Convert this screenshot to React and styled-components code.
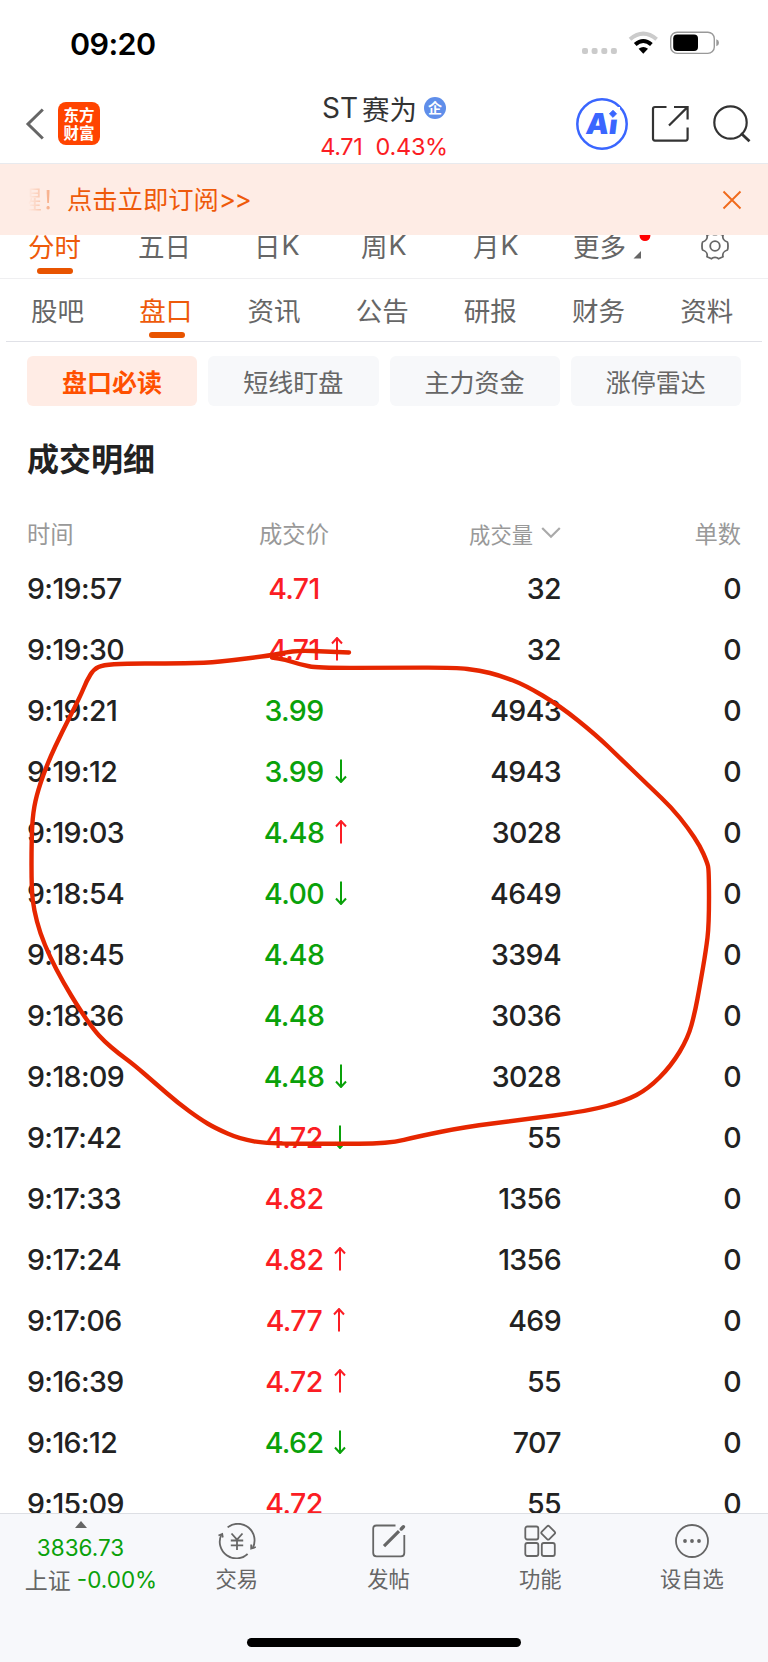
import React from 'react'
import styled, { createGlobalStyle, css } from 'styled-components'

const UP = '#fb1d24'
const DOWN = '#0aa10a'

const chartTabs = [
    { name: '分时', active: true },
    { name: '五日' },
    { name: '日', k: true },
    { name: '周', k: true },
    { name: '月', k: true },
    { name: '更多', more: true },
]

const infoTabs = ['股吧', '盘口', '资讯', '公告', '研报', '财务', '资料']
const chips = ['盘口必读', '短线盯盘', '主力资金', '涨停雷达']

const deals = [
    { time: '9:19:57', price: '4.71', color: UP, volume: 32 },
    { time: '9:19:30', price: '4.71', color: UP, arrow: 'up', volume: 32 },
    { time: '9:19:21', price: '3.99', color: DOWN, volume: 4943 },
    { time: '9:19:12', price: '3.99', color: DOWN, arrow: 'down', volume: 4943 },
    { time: '9:19:03', price: '4.48', color: DOWN, arrow: 'up', volume: 3028 },
    { time: '9:18:54', price: '4.00', color: DOWN, arrow: 'down', volume: 4649 },
    { time: '9:18:45', price: '4.48', color: DOWN, volume: 3394 },
    { time: '9:18:36', price: '4.48', color: DOWN, volume: 3036 },
    { time: '9:18:09', price: '4.48', color: DOWN, arrow: 'down', volume: 3028 },
    { time: '9:17:42', price: '4.72', color: UP, arrow: 'down', volume: 55 },
    { time: '9:17:33', price: '4.82', color: UP, volume: 1356 },
    { time: '9:17:24', price: '4.82', color: UP, arrow: 'up', volume: 1356 },
    { time: '9:17:06', price: '4.77', color: UP, arrow: 'up', volume: 469 },
    { time: '9:16:39', price: '4.72', color: UP, arrow: 'up', volume: 55 },
    { time: '9:16:12', price: '4.62', color: DOWN, arrow: 'down', volume: 707 },
    { time: '9:15:09', price: '4.72', color: UP, volume: 55 },
]

// hand drawn mark around the odd orders
const markPoints = [
    [349, 652.5], [325, 651.5], [300, 650.5], [285, 652.5], [270, 655.5], [235, 660], [205, 663],
    [165, 663.5], [125, 663.5], [103, 665], [94, 669], [87, 680], [80, 697], [62, 732], [48, 762],
    [38, 790], [33, 812], [31.5, 840], [31.5, 890], [34, 910], [40, 933], [50, 957], [63, 982],
    [80, 1010], [94, 1030], [104, 1041], [118, 1053], [133, 1064], [155, 1083], [178, 1103],
    [200, 1119], [215, 1128], [240, 1139], [268, 1143.7], [330, 1143.7], [388, 1143.7], [420, 1136],
    [465, 1127], [520, 1120], [588, 1111], [625, 1101], [648, 1089], [671, 1066], [688, 1038],
    [695, 1012], [700, 985], [706, 950], [709, 925], [709, 870], [707, 862], [700, 846], [688, 828],
    [672, 808], [650, 787], [620, 758], [596, 735], [560, 706], [525, 685], [500, 675.5], [480, 670.5],
    [455, 667.5], [390, 667.8], [318, 668], [300, 664.5], [285, 659.5], [272, 657.5],
]

const smoothPath = (pts) => {
    let d = `M${pts[0][0]} ${pts[0][1]}`
    for (let i = 1; i < pts.length - 1; i++) {
        const [x, y] = pts[i]
        const [nx, ny] = pts[i + 1]
        d += ` Q${x} ${y} ${(x + nx) / 2} ${(y + ny) / 2}`
    }
    const last = pts[pts.length - 1]
    return `${d} L${last[0]} ${last[1]}`
}

const Arrow = ({ dir }) => (
    <ArrowIcon viewBox="0 0 12 24" $dir={dir}>
        <path d="M6 23.5V1.5M1 6.5L6 1L11 6.5" />
    </ArrowIcon>
)

const StatusBar = () => (
    <Status>
        <Clock>09:20</Clock>
        <svg width="138" height="26" viewBox="0 0 138 26">
            <g fill="#cbcbcb">
                <rect x="0" y="17" width="6" height="6" rx="2" />
                <rect x="9.6" y="17" width="6" height="6" rx="2" />
                <rect x="19.3" y="17" width="6" height="6" rx="2" />
                <rect x="28.9" y="17" width="6" height="6" rx="2" />
            </g>
            <g fill="none" strokeWidth="4">
                <path d="M48 8.3Q61.3 -3 74.6 8.3" stroke="#cbcbcb" />
                <path d="M53.2 13.6Q61.3 6.4 69.4 13.6" stroke="#000" />
            </g>
            <path d="M56.6 17.8Q61.3 14 66 17.8L61.3 22.8Z" fill="#000" />
            <rect x="88.7" y="1.2" width="43.6" height="21.2" rx="6.5" fill="none" stroke="#999" strokeWidth="1.4" />
            <rect x="91.2" y="3.6" width="24.8" height="16.4" rx="4" fill="#000" />
            <path d="M134.3 8.3Q137 9.2 137 11.8Q137 14.4 134.3 15.3Z" fill="#999" />
        </svg>
    </Status>
)

const Header = () => (
    <TopBar>
        <TopLeft>
            <svg width="20" height="32" viewBox="0 0 20 32">
                <path d="M17.8 1.5L3 16L17.8 30.5" fill="none" stroke="#666" strokeWidth="3" />
            </svg>
            <Logo>
                <span>东方</span>
                <span>财富</span>
            </Logo>
        </TopLeft>
        <Stock>
            <StockName>
                <span>ST</span>
                赛为
                <Badge>企</Badge>
            </StockName>
            <Quote>
                <span>4.71</span>
                <span>0.43%</span>
            </Quote>
        </Stock>
        <TopRight>
            <svg width="52" height="52" viewBox="0 0 52 52">
                <circle cx="26" cy="26" r="24.7" fill="none" stroke="#3a66ff" strokeWidth="2.5" />
                <AiText x="13.5" y="36" transform="skewX(-7)">Ai</AiText>
                <rect x="32" y="9" width="12" height="12.6" fill="#fff" />
                <path d="M37 12.2L40.6 15.8L37 19.4L33.4 15.8Z" fill="#3a66ff" stroke="#3a66ff" strokeWidth="0.8" />
            </svg>
            <svg width="38" height="38" viewBox="0 0 38 38" fill="none" stroke="#333" strokeWidth="2.2">
                <path d="M15.5 2H4Q2 2 2 4V33.6Q2 35.6 4 35.6H34.6Q36.6 35.6 36.6 33.6V22.5" />
                <path d="M23 2H36.6V14.5M36.2 2.4L18 20.5" />
            </svg>
            <svg width="38" height="38" viewBox="0 0 38 38" fill="none" stroke="#333" strokeWidth="2.2">
                <circle cx="17.5" cy="17.5" r="16.2" />
                <path d="M28 28.2L36.5 36.3" strokeWidth="2.8" />
            </svg>
        </TopRight>
    </TopBar>
)

const TradeIcon = () => (
    <svg width="40" height="36" viewBox="0 0 40 36" fill="none" stroke="#666" strokeWidth="1.8">
        <path d="M10.6 4.4A16.6 16.6 0 0 1 35.7 25M30.6 31A16.6 16.6 0 0 1 4.2 12" />
        <path d="M1.5 12.5L5.2 11L5.8 14.5" />
        <path d="M34.2 21.5V25.5L38.8 24" />
        <path d="M14.5 10.5L20 16.7L25.5 10.5M20 16.7V27M13.8 17.5H26.2M13.8 22.3H26.2" />
    </svg>
)

const PostIcon = () => (
    <svg width="36" height="36" viewBox="0 0 36 36" fill="none" stroke="#666" strokeWidth="1.8">
        <path d="M24.5 2.5H5.5Q2.2 2.5 2.2 5.8V30Q2.2 33.3 5.5 33.3H30Q33.3 33.3 33.3 30V12" />
        <path d="M13 23.2L28 8.2" strokeWidth="3.2" />
        <path d="M30.3 5.9L32.4 3.8" strokeWidth="3.6" strokeLinecap="round" />
    </svg>
)

const FeatureIcon = () => (
    <svg width="36" height="36" viewBox="0 0 36 36" fill="none" stroke="#666" strokeWidth="1.8">
        <rect x="3.3" y="3.5" width="13" height="13" rx="2" />
        <rect x="3.3" y="20" width="13" height="13" rx="2" />
        <rect x="19.8" y="20" width="13" height="13" rx="2" />
        <rect x="20.9" y="4.4" width="10.6" height="10.6" rx="1.6" transform="rotate(45 26.2 9.7)" />
    </svg>
)

const MoreIcon = () => (
    <svg width="36" height="36" viewBox="0 0 36 36" fill="none" stroke="#666" strokeWidth="1.8">
        <circle cx="18" cy="18" r="16" />
        <g fill="#666" stroke="none">
            <circle cx="11" cy="18" r="1.9" />
            <circle cx="18" cy="18" r="1.9" />
            <circle cx="25" cy="18" r="1.9" />
        </g>
    </svg>
)

const GearIcon = () => (
    <svg width="30" height="30" viewBox="0 0 30 30" fill="none" stroke="#666" strokeWidth="1.8">
        <path d="M11.5 2.2C13 4.2 17 4.2 18.5 2.2L23 4.3C22.2 7.2 24 9.9 27.4 11C28.2 12 28.2 18 27.4 19C24 20 22.2 22.8 23 25.7L18.5 27.8C17 25.8 13 25.8 11.5 27.8L7 25.7C7.8 22.8 6 20 2.6 19C1.8 18 1.8 12 2.6 11C6 9.9 7.8 7.2 7 4.3Z" strokeLinejoin="round" />
        <circle cx="15" cy="15" r="4.8" />
    </svg>
)

const navItems = [
    { name: '交易', Icon: TradeIcon },
    { name: '发帖', Icon: PostIcon },
    { name: '功能', Icon: FeatureIcon },
    { name: '设自选', Icon: MoreIcon },
]

const App = () => {
    return (
        <Page>
            <GlobalStyle />
            <StatusBar />
            <Header />
            <Notice>
                <Faded>醒！</Faded>
                <NoticeText>点击立即订阅<span>&gt;&gt;</span></NoticeText>
                <svg width="20" height="20" viewBox="0 0 20 20">
                    <path d="M1.5 1.5L18.5 18.5M18.5 1.5L1.5 18.5" stroke="#f06a1c" strokeWidth="1.9" />
                </svg>
            </Notice>
            <ChartTabs>
                {chartTabs.map((tab) => (
                    <ChartTab key={tab.name} $active={tab.active}>
                        <TabLabel>
                            {tab.name}
                            {tab.k && <Latin>K</Latin>}
                            {tab.more && (
                                <MoreMark viewBox="0 0 18 30">
                                    <circle cx="12" cy="4.7" r="5.4" fill="#f00" />
                                    <path d="M8 20V27.5H0.5Z" fill="#666" />
                                </MoreMark>
                            )}
                        </TabLabel>
                        {tab.active && <Underline />}
                    </ChartTab>
                ))}
                <ChartTab>
                    <TabLabel><GearIcon /></TabLabel>
                </ChartTab>
            </ChartTabs>
            <InfoTabs>
                {infoTabs.map((name) => (
                    <InfoTab key={name} $active={name === '盘口'}>
                        <span>{name}</span>
                        {name === '盘口' && <Underline />}
                    </InfoTab>
                ))}
            </InfoTabs>
            <Chips>
                {chips.map((name, i) => (
                    <Chip key={name} $active={i === 0}>{name}</Chip>
                ))}
            </Chips>
            <Title>成交明细</Title>
            <TableHead>
                <span>时间</span>
                <HeadPrice>成交价</HeadPrice>
                <HeadVolume>
                    成交量
                    <svg width="20" height="14" viewBox="0 0 20 14">
                        <path d="M1.2 2L10 10.8L18.8 2" fill="none" stroke="#aaa" strokeWidth="2.2" />
                    </svg>
                </HeadVolume>
                <HeadCount>单数</HeadCount>
            </TableHead>
            <Deals>
                {deals.map((deal) => (
                    <DealRow key={deal.time}>
                        <span>{deal.time}</span>
                        <Price $color={deal.color}>
                            <span>{deal.price}</span>
                            {deal.arrow && <Arrow dir={deal.arrow} />}
                        </Price>
                        <Num>{deal.volume}</Num>
                        <Num>0</Num>
                    </DealRow>
                ))}
            </Deals>
            <BottomBar>
                <NavRow>
                    <IndexBox>
                        <svg width="12" height="7" viewBox="0 0 12 7">
                            <path d="M6 0L12 7H0Z" fill="#666" />
                        </svg>
                        <IndexValue>3836.73</IndexValue>
                        <IndexName>上证<span>-0.00%</span></IndexName>
                    </IndexBox>
                    {navItems.map(({ name, Icon }) => (
                        <NavItem key={name}>
                            <Icon />
                            <span>{name}</span>
                        </NavItem>
                    ))}
                </NavRow>
                <HomeBar />
            </BottomBar>
            <Mark viewBox="0 0 768 1662">
                <path d={smoothPath(markPoints)} />
            </Mark>
        </Page>
    )
}

const GlobalStyle = createGlobalStyle`
    * {
        box-sizing: border-box;
    }

    body {
        margin: 0;
        background: #fff;
    }

    svg {
        display: block;
        flex-shrink: 0;
    }
`

const numFont = css`
    font-family: Inter, "Liberation Sans", "Noto Sans CJK SC", sans-serif;
`

const Page = styled.div`
    position: relative;
    display: flex;
    flex-direction: column;
    width: 768px;
    height: 1662px;
    overflow: hidden;
    background: #fff;
    color: #222;
    font-family: "Noto Sans CJK SC", sans-serif;
    white-space: nowrap;
`

const Status = styled.div`
    display: flex;
    justify-content: space-between;
    align-items: center;
    height: 88px;
    padding: 0 48px 0 70px;
    flex-shrink: 0;
`

const Clock = styled.div`
    ${numFont}
    font-size: 30.5px;
    font-weight: 600;
    letter-spacing: -0.6px;
    padding-bottom: 2px;
    color: #000;
`

const TopBar = styled.div`
    display: grid;
    grid-template-columns: 1fr auto 1fr;
    height: 76px;
    padding: 0 17px 0 25px;
    border-bottom: 1px solid #e8eaee;
    flex-shrink: 0;
`

const TopLeft = styled.div`
    display: flex;
    align-items: center;
    gap: 13px;
    padding-bottom: 4px;
`

const Logo = styled.div`
    display: flex;
    flex-direction: column;
    align-items: center;
    justify-content: center;
    width: 42px;
    height: 43px;
    border-radius: 8px;
    background: #ff4400;
    color: #fff;
    font-size: 15.5px;
    font-weight: 700;
    line-height: 18px;
    padding-bottom: 2px;

    span {
        height: 18px;
    }
`

const Stock = styled.div`
    display: flex;
    flex-direction: column;
    align-items: center;
    width: 126px;
    margin-right: 8px;
`

const StockName = styled.div`
    display: flex;
    align-items: center;
    height: 40px;
    font-size: 27.5px;
    line-height: 40px;
    color: #333;

    > span {
        ${numFont}
        font-size: 28px;
        margin-right: 4px;
    }
`

const Badge = styled.div`
    width: 22px;
    height: 22px;
    margin-left: 7px;
    border-radius: 50%;
    background: #5f8eea;
    color: #fff;
    font-size: 14px;
    font-weight: 700;
    line-height: 21px;
    text-align: center;
`

const Quote = styled.div`
    ${numFont}
    display: flex;
    gap: 13px;
    color: ${UP};
    font-size: 23.5px;
    line-height: 30px;
    margin-top: 4px;
    letter-spacing: -0.3px;
`

const TopRight = styled.div`
    display: flex;
    align-items: center;
    justify-content: flex-end;
    gap: 24px;
    padding-bottom: 3px;

    svg:first-child {
        margin-right: -1px;
    }
`

const AiText = styled.text`
    ${numFont}
    font-size: 29px;
    font-weight: 900;
    fill: #3a66ff;
`

const Notice = styled.div`
    display: flex;
    align-items: center;
    height: 71px;
    padding: 0 26px 0 28px;
    background: #feece5;
    color: #ee5a0a;
    font-size: 25.3px;
    flex-shrink: 0;

    svg {
        margin-left: auto;
    }
`

const Faded = styled.div`
    display: flex;
    justify-content: flex-end;
    width: 39px;
    overflow: hidden;
    padding-bottom: 3px;
    mask-image: linear-gradient(to right, transparent, rgba(0, 0, 0, 0.75));
`

const NoticeText = styled.div`
    display: flex;
    padding-bottom: 3px;

    span {
        ${numFont}
        font-size: 26px;
        letter-spacing: -1.5px;
        padding-top: 4px;
    }
`

const ChartTabs = styled.div`
    display: grid;
    grid-template-columns: 110px 116px 107px 112px 100px 127px auto;
    height: 44px;
    padding-left: 28px;
    overflow: hidden;
    border-bottom: 1px solid #efeff1;
    flex-shrink: 0;
`

const ChartTab = styled.div`
    display: flex;
    flex-direction: column;
    align-items: flex-start;
    color: ${({ $active }) => ($active ? '#ee5a0a' : '#666')};
    font-size: 26.5px;
`

const TabLabel = styled.div`
    display: flex;
    align-items: center;
    height: 33px;
    line-height: 24px;
    padding-bottom: 11px;
`

const MoreMark = styled.svg`
    width: 18px;
    height: 30px;
    margin-left: 7px;
`

const Latin = styled.span`
    ${numFont}
    font-size: 27px;
    margin-left: 1px;
`

const Underline = styled.div`
    width: 36px;
    height: 6px;
    border-radius: 3px;
    background: #e85400;
    margin-left: 9px;
`

const InfoTabs = styled.div`
    display: grid;
    grid-template-columns: repeat(7, 108.2px);
    justify-content: start;
    height: 63px;
    margin: 0 6px;
    border-bottom: 1px solid #e0e1e7;
    flex-shrink: 0;
`

const InfoTab = styled.div`
    display: flex;
    flex-direction: column;
    align-items: center;
    color: ${({ $active }) => ($active ? '#ee5a0a' : '#666')};
    font-size: 26.5px;
    margin-left: -3px;
    margin-right: 2px;

    span {
        height: 53px;
        line-height: 61px;
    }

    ${Underline} {
        margin-left: 2px;
    }
`

const Chips = styled.div`
    display: grid;
    grid-template-columns: repeat(4, 1fr);
    gap: 11px;
    padding: 14px 27px 0;
    flex-shrink: 0;
`

const Chip = styled.div`
    height: 50px;
    border-radius: 6px;
    background: ${({ $active }) => ($active ? '#ffece5' : '#f7f8fa')};
    color: ${({ $active }) => ($active ? '#ff5000' : '#666')};
    font-size: 25px;
    font-weight: ${({ $active }) => ($active ? 700 : 400)};
    line-height: 50px;
    text-align: center;
`

const Title = styled.div`
    height: 106px;
    padding-left: 27px;
    font-size: 32px;
    font-weight: 700;
    line-height: 102px;
    flex-shrink: 0;
`

const tableGrid = css`
    display: grid;
    grid-template-columns: 172px 190px 172px 1fr;
    align-items: center;
    padding: 0 27px;
`

const TableHead = styled.div`
    ${tableGrid}
    height: 46px;
    padding-bottom: 4px;
    color: #999;
    font-size: 23.3px;
    flex-shrink: 0;
`

const HeadPrice = styled.span`
    text-align: center;
`

const HeadVolume = styled.span`
    display: flex;
    align-items: center;
    justify-content: flex-end;
    gap: 8px;
    font-size: 21.3px;
`

const HeadCount = styled.span`
    text-align: right;
`

const Deals = styled.div`
    flex: 1;
    min-height: 0;
    overflow: hidden;
`

const DealRow = styled.div`
    ${tableGrid}
    ${numFont}
    height: 61px;
    padding-bottom: 1px;
    font-size: 28.5px;
    font-weight: 450;
    letter-spacing: -0.6px;
`

const Price = styled.div`
    display: grid;
    grid-template-columns: 1fr auto 1fr;
    align-items: center;
    color: ${({ $color }) => $color};

    span {
        grid-column: 2;
    }
`

const ArrowIcon = styled.svg`
    width: 12px;
    height: 24px;
    margin-left: 11px;
    fill: none;
    stroke: ${({ $dir }) => ($dir === 'up' ? UP : DOWN)};
    stroke-width: 2;
    transform: ${({ $dir }) => ($dir === 'up' ? 'none' : 'rotate(180deg)')};
`

const Num = styled.span`
    text-align: right;
`

const BottomBar = styled.div`
    display: flex;
    flex-direction: column;
    align-items: center;
    height: 149px;
    background: #f7f8fb;
    border-top: 1px solid #dddfe4;
    flex-shrink: 0;
`

const NavRow = styled.div`
    display: grid;
    grid-template-columns: 161px repeat(4, 151.7px);
    width: 768px;
    height: 124px;
`

const IndexBox = styled.div`
    display: flex;
    flex-direction: column;
    align-items: center;
    padding-top: 7px;
    color: ${DOWN};
`

const IndexValue = styled.div`
    ${numFont}
    font-size: 22.5px;
    line-height: 30px;
    margin-top: 5px;
`

const IndexName = styled.div`
    display: flex;
    align-items: center;
    margin: 0 -10px 0;
    padding-left: 21px;
    color: #666;
    font-size: 23px;
    line-height: 30px;

    span {
        ${numFont}
        margin-left: 6px;
        padding-top: 2px;
        font-size: 22.5px;
        color: ${DOWN};
    }
`

const NavItem = styled.div`
    display: flex;
    flex-direction: column;
    align-items: center;
    padding-top: 9px;
    color: #666;
    font-size: 21.3px;

    span {
        line-height: 38px;
    }
`

const HomeBar = styled.div`
    width: 274px;
    height: 9px;
    border-radius: 5px;
    background: #000;
`

const Mark = styled.svg`
    position: absolute;
    top: 0;
    left: 0;
    width: 768px;
    height: 1662px;
    pointer-events: none;
    fill: none;
    stroke: #e62600;
    stroke-width: 4.4;
    stroke-linecap: round;
    stroke-linejoin: round;
`

export default App
